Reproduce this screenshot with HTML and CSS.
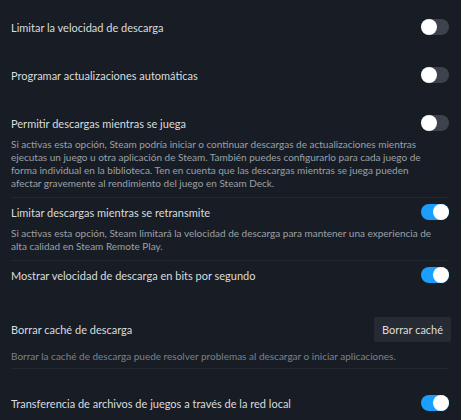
FILE: index.html
```html
<!DOCTYPE html>
<html>
<head>
  <title>Descargas</title>
  <link rel="stylesheet" href="styles.css">
</head>
<body>
  <div class="settings">

    <div class="group">
      <div class="field">
        <div class="field-row">
          <span class="field-label">Limitar la velocidad de descarga</span>
          <span class="toggle"></span>
        </div>
      </div>
    </div>

    <div class="group">
      <div class="field">
        <div class="field-row">
          <span class="field-label">Programar actualizaciones automáticas</span>
          <span class="toggle"></span>
        </div>
      </div>
    </div>

    <div class="group">
      <div class="field">
        <div class="field-row">
          <span class="field-label">Permitir descargas mientras se juega</span>
          <span class="toggle"></span>
        </div>
        <div class="field-desc">Si activas esta opción, Steam podría iniciar o continuar descargas de actualizaciones mientras ejecutas un juego u otra aplicación de Steam. También puedes configurarlo para cada juego de forma individual en la biblioteca. Ten en cuenta que las descargas mientras se juega pueden afectar gravemente al rendimiento del juego en Steam Deck.</div>
      </div>
      <div class="field">
        <div class="field-row">
          <span class="field-label">Limitar descargas mientras se retransmite</span>
          <span class="toggle on"></span>
        </div>
        <div class="field-desc">Si activas esta opción, Steam limitará la velocidad de descarga para mantener una experiencia de alta calidad en Steam Remote Play.</div>
      </div>
      <div class="field">
        <div class="field-row">
          <span class="field-label">Mostrar velocidad de descarga en bits por segundo</span>
          <span class="toggle on"></span>
        </div>
      </div>
    </div>

    <div class="group action ruled">
      <div class="field">
        <div class="field-row">
          <span class="field-label">Borrar caché de descarga</span>
          <button class="button">Borrar caché</button>
        </div>
        <div class="field-desc dim">Borrar la caché de descarga puede resolver problemas al descargar o iniciar aplicaciones.</div>
      </div>
    </div>

    <div class="group">
      <div class="field">
        <div class="field-row">
          <span class="field-label">Transferencia de archivos de juegos a través de la red local</span>
          <span class="toggle on"></span>
        </div>
        <div class="field-desc">Permite que otros dispositivos de tu red local transfieran archivos de juegos a este equipo.</div>
      </div>
    </div>

  </div>
</body>
</html>
```

FILE: styles.css
```css
body {
  margin: 0;
  background-color: #181d25;
  font-family: Lato, "Liberation Sans", sans-serif;
  color: #dcdedf;
}
.settings {
  padding: 13px 12px 0 11px;
}
.group + .group {
  margin-top: 17px;
}
.group.ruled {
  border-bottom: 1px solid #242931;
}
.group.ruled + .group {
  margin-top: 20px;
}
.group.action {
  margin-top: 21px;
}
.field {
  padding: 4px 0 7px;
}
.field + .field {
  border-top: 1px solid #242931;
}
.field-row {
  display: flex;
  align-items: center;
  justify-content: space-between;
  min-height: 20px;
}
.field-label {
  font-size: 11px;
  color: #d9dcde;
}
.field-desc {
  margin: 5px 9px 0 0;
  font-size: 10px;
  line-height: 13px;
  color: #9aa0a7;
}
.field-desc.dim {
  color: #7b8189;
}
.action .field {
  padding-bottom: 5px;
}
.action .field-desc {
  margin-top: 8px;
}
.toggle {
  position: relative;
  width: 28px;
  height: 16px;
  border-radius: 8px;
  background-color: #3d424c;
  flex-shrink: 0;
}
.toggle::after {
  content: '';
  position: absolute;
  left: 0;
  top: 0;
  width: 16px;
  height: 16px;
  border-radius: 50%;
  background-color: #fff;
}
.toggle.on {
  background-color: #1a9fff;
}
.toggle.on::after {
  left: 12px;
}
.button {
  height: 25px;
  width: 77px;
  margin-right: -2px;
  padding: 0;
  border: none;
  border-radius: 2px;
  background-color: #262a32;
  color: #dcdedf;
  font-family: Lato, "Liberation Sans", sans-serif;
  font-size: 11px;
}
```
